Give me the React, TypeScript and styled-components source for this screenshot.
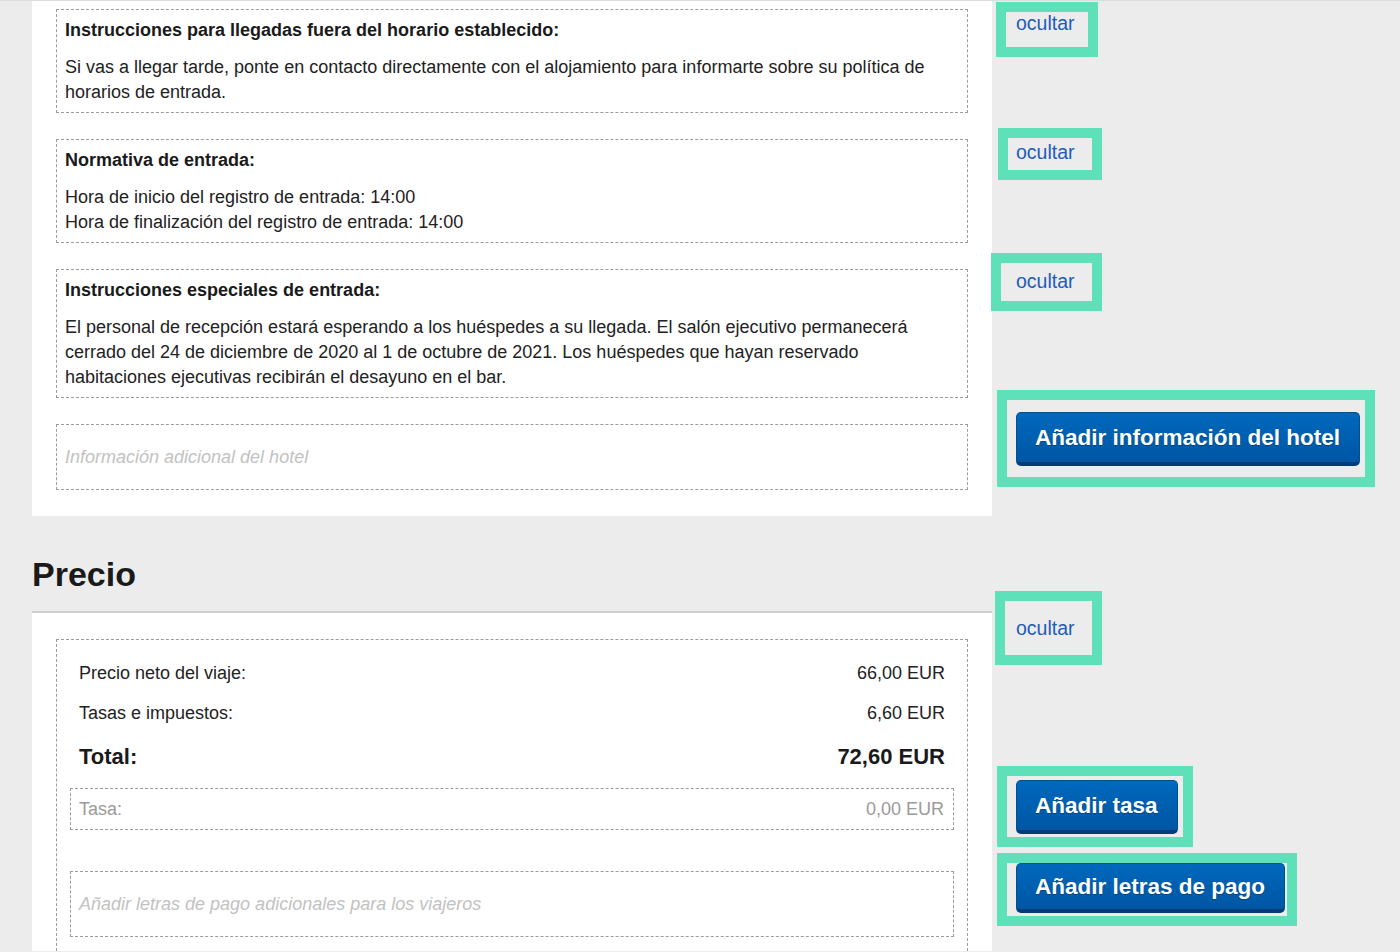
import React from "react";
import styled, { createGlobalStyle } from "styled-components";

const GlobalStyle = createGlobalStyle`
  html, body { margin: 0; padding: 0; overflow: hidden; background: #ececec; }
  body { font-family: "Liberation Sans", Arial, sans-serif; color: #222; }
  * { box-sizing: border-box; }
`;

const Page = styled.div`
  display: flex;
  align-items: flex-start;
  border-top: 1px solid #dddddd;
  min-height: 952px;
`;

const Main = styled.main`
  width: 960px;
  margin-left: 32px;
  flex-shrink: 0;
`;

const Card = styled.section<{ $pt: number; $pb: number }>`
  background: #ffffff;
  padding: ${(p) => p.$pt}px 24px ${(p) => p.$pb}px;
  display: flex;
  flex-direction: column;
  gap: 26px;
`;

const InfoBox = styled.div`
  border: 1px dashed #9c9c9c;
  padding: 10px 8px 7px;
`;

const InfoTitle = styled.h3`
  margin: 0 0 15px;
  font-size: 18px;
  line-height: 20px;
  font-weight: 700;
  color: #1a1a1a;
`;

const InfoText = styled.p`
  margin: 0;
  font-size: 18px;
  line-height: 25px;
  color: #222;
`;

const PlaceholderBox = styled.div`
  height: 66px;
  border: 1px dashed #9c9c9c;
  padding: 0 8px;
  display: flex;
  align-items: center;
  font-size: 18px;
  font-style: italic;
  color: #c2c2c2;
`;

const Heading = styled.h2`
  margin: 0;
  padding: 38px 0 17px;
  font-size: 34px;
  line-height: 40px;
  font-weight: 700;
  color: #1a1a1a;
  border-bottom: 2px solid #cfcfcf;
`;

const PriceBox = styled.div`
  border: 1px dashed #9c9c9c;
  border-bottom: none;
  padding: 14px 13px 14px;
  display: flex;
  flex-direction: column;
`;

const PriceRow = styled.div<{ $h: number; $total?: boolean }>`
  height: ${(p) => p.$h}px;
  padding: 0 9px;
  display: flex;
  align-items: center;
  justify-content: space-between;
  font-size: ${(p) => (p.$total ? 22 : 18)}px;
  font-weight: ${(p) => (p.$total ? 700 : 400)};
  color: ${(p) => (p.$total ? "#1a1a1a" : "#222")};
`;

const FeeBox = styled.div`
  margin-top: 7px;
  height: 42px;
  border: 1px dashed #9c9c9c;
  padding: 0 9px 0 8px;
  display: flex;
  align-items: center;
  justify-content: space-between;
  font-size: 18px;
  color: #9a9a9a;
`;

const PaymentSlot = styled.div`
  margin-top: 41px;
`;

const Aside = styled.aside`
  display: flex;
  flex-direction: column;
  align-items: flex-start;
`;

const Highlight = styled.div<{ $mt: number; $ml: number; $pad: string }>`
  margin-top: ${(p) => p.$mt}px;
  margin-left: ${(p) => p.$ml}px;
  padding: ${(p) => p.$pad};
  border: 10px solid #5ee0b8;
  display: flex;
`;

const HideLink = styled.a`
  display: block;
  font-size: 19.5px;
  line-height: 22px;
  color: #1d5cb8;
  text-decoration: none;
  cursor: pointer;
`;

const ActionButton = styled.button<{ $h: number }>`
  height: ${(p) => p.$h}px;
  padding: 0 19px 0 18px;
  font-family: "Liberation Sans", Arial, sans-serif;
  font-size: 22.5px;
  font-weight: 700;
  color: #ffffff;
  white-space: nowrap;
  background: linear-gradient(#0068bd, #0056a3);
  border: 1px solid #00508f;
  border-bottom: 4px solid #003d78;
  border-radius: 5px;
  text-shadow: 0 1px 1px rgba(0, 0, 0, 0.25);
  cursor: pointer;
`;

type Action =
  | { kind: "hide"; mt: number; ml: number; pad: string }
  | { kind: "button"; label: string; h: number; mt: number; ml: number; pad: string };

const actions: Action[] = [
  { kind: "hide", mt: 1, ml: 4, pad: "0 13px 13px 10px" },
  { kind: "hide", mt: 71, ml: 6, pad: "3px 17px 7px 8px" },
  { kind: "hide", mt: 73, ml: -1, pad: "7px 17px 9px 15px" },
  { kind: "button", label: "Añadir información del hotel", h: 54, mt: 79, ml: 5, pad: "12px 5px 11px 9px" },
  { kind: "hide", mt: 104, ml: 3, pad: "16px 17px 16px 11px" },
  { kind: "button", label: "Añadir tasa", h: 54, mt: 101, ml: 5, pad: "4px 5px 3px 9px" },
  { kind: "button", label: "Añadir letras de pago", h: 50, mt: 6, ml: 5, pad: "0 2px 3px 9px" },
];

export default function App() {
  return (
    <>
      <GlobalStyle />
      <Page>
        <Main>
          <Card $pt={8} $pb={26}>
            <InfoBox>
              <InfoTitle>Instrucciones para llegadas fuera del horario establecido:</InfoTitle>
              <InfoText>
                Si vas a llegar tarde, ponte en contacto directamente con el alojamiento para informarte sobre su política de horarios de entrada.
              </InfoText>
            </InfoBox>
            <InfoBox>
              <InfoTitle>Normativa de entrada:</InfoTitle>
              <InfoText>Hora de inicio del registro de entrada: 14:00</InfoText>
              <InfoText>Hora de finalización del registro de entrada: 14:00</InfoText>
            </InfoBox>
            <InfoBox>
              <InfoTitle>Instrucciones especiales de entrada:</InfoTitle>
              <InfoText>
                El personal de recepción estará esperando a los huéspedes a su llegada. El salón ejecutivo permanecerá cerrado del 24 de diciembre de 2020 al 1 de octubre de 2021. Los huéspedes que hayan reservado habitaciones ejecutivas recibirán el desayuno en el bar.
              </InfoText>
            </InfoBox>
            <PlaceholderBox>Información adicional del hotel</PlaceholderBox>
          </Card>

          <Heading>Precio</Heading>

          <Card $pt={26} $pb={0}>
            <PriceBox>
              <PriceRow $h={39}>
                <span>Precio neto del viaje:</span>
                <span>66,00 EUR</span>
              </PriceRow>
              <PriceRow $h={40}>
                <span>Tasas e impuestos:</span>
                <span>6,60 EUR</span>
              </PriceRow>
              <PriceRow $h={48} $total>
                <span>Total:</span>
                <span>72,60 EUR</span>
              </PriceRow>
              <FeeBox>
                <span>Tasa:</span>
                <span>0,00 EUR</span>
              </FeeBox>
              <PaymentSlot>
                <PlaceholderBox>Añadir letras de pago adicionales para los viajeros</PlaceholderBox>
              </PaymentSlot>
            </PriceBox>
          </Card>
        </Main>

        <Aside>
          {actions.map((a, i) => (
            <Highlight key={i} $mt={a.mt} $ml={a.ml} $pad={a.pad}>
              {a.kind === "hide" ? (
                <HideLink>ocultar</HideLink>
              ) : (
                <ActionButton $h={a.h}>{a.label}</ActionButton>
              )}
            </Highlight>
          ))}
        </Aside>
      </Page>
    </>
  );
}
